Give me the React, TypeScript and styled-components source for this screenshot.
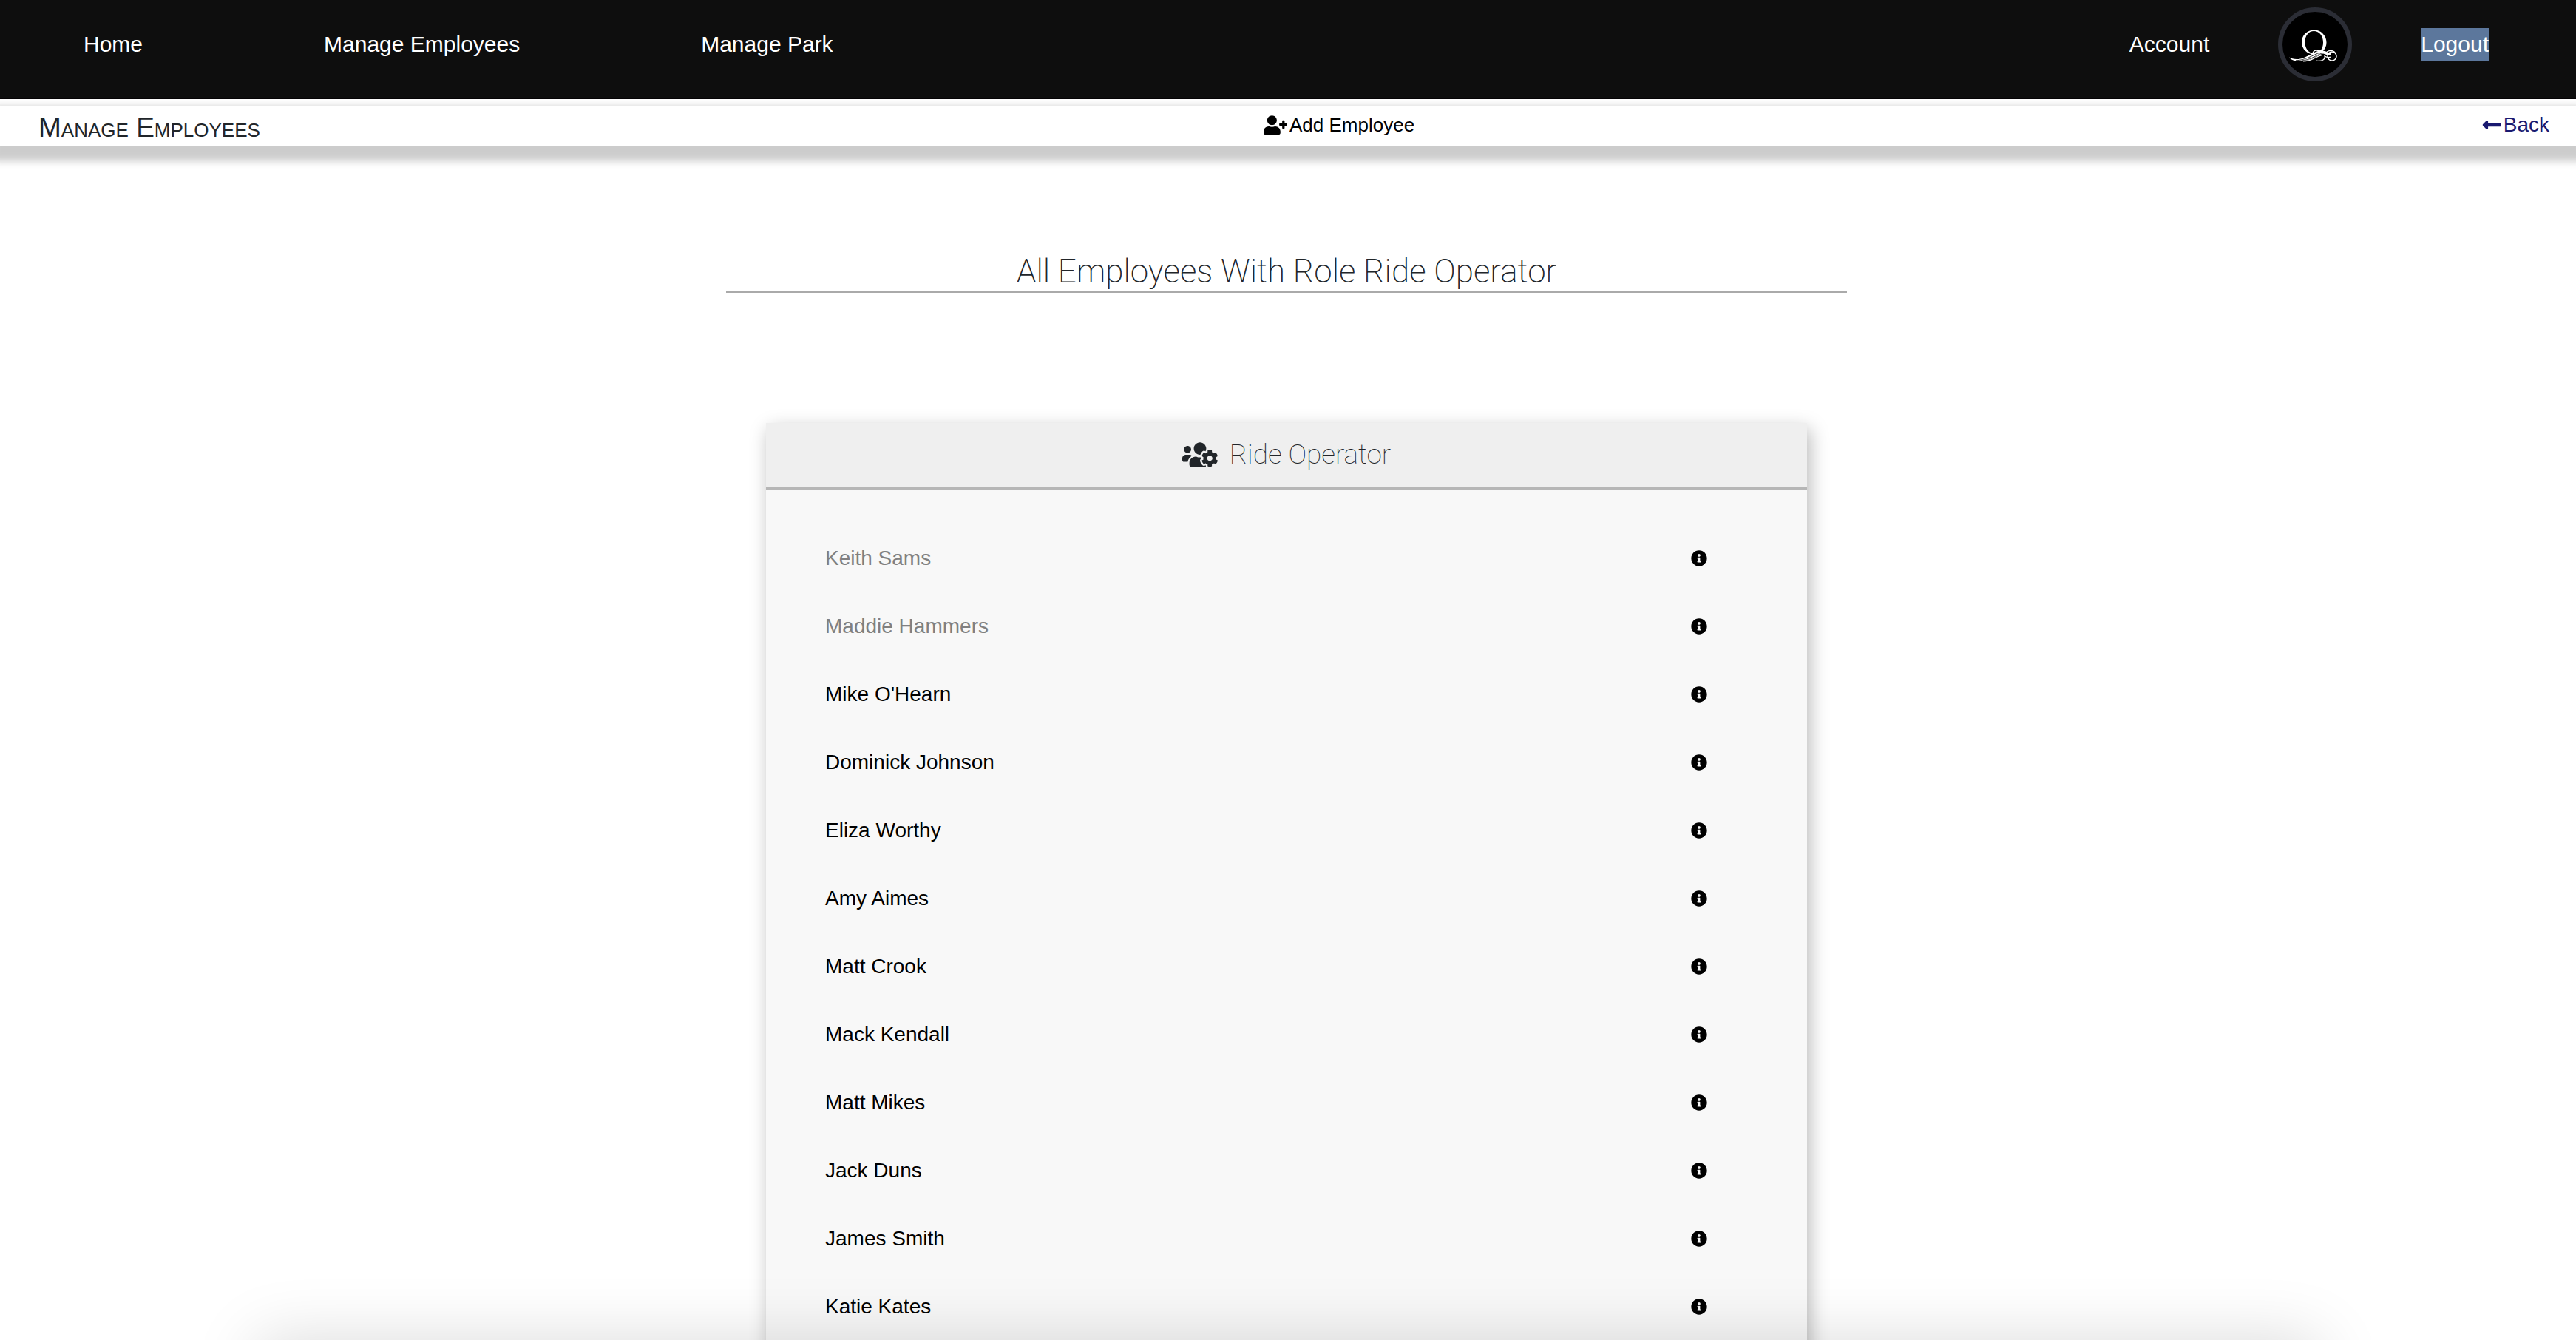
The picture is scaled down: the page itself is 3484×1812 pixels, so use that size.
import React from "react";
import styled, { createGlobalStyle } from "styled-components";
import { FaInfoCircle, FaLongArrowAltLeft, FaUserPlus, FaUsersCog } from "react-icons/fa";

const GlobalStyle = createGlobalStyle`
  *, *::before, *::after { box-sizing: border-box; }
  html, body { margin: 0; height: 100%; overflow: hidden; }
  body {
    background: #fff;
    color: #212529;
    font-family: "Liberation Sans", Arial, Helvetica, sans-serif;
    font-size: 28px;
    line-height: 42px;
  }
`;

const NavBar = styled.nav`
  display: flex;
  justify-content: space-between;
  padding: 10px 118px 22px 113px;
  border-bottom: 2px solid #050305;
  background: #0e0e0e;
`;

const NavGroup = styled.div<{ $gap: number }>`
  display: flex;
  align-items: center;
  gap: ${({ $gap }) => $gap}px;
`;

const NavLink = styled.a<{ $selected?: boolean }>`
  color: #fff;
  font-size: 30px;
  line-height: 44px;
  text-decoration: none;
  background: ${({ $selected }) => ($selected ? "#5c779c" : "transparent")};
`;

const Avatar = styled.a`
  display: block;
  width: 100px;
  height: 100px;
  border: 6px solid #2b2d35;
  border-radius: 50%;
  background: #000;
  overflow: hidden;
`;

const SubBar = styled.header`
  position: relative;
  display: flex;
  justify-content: space-between;
  align-items: center;
  margin-top: 10px;
  height: 54px;
  padding: 0 36px 4px 52px;
  background: #fff;
  box-shadow: 0 10px 10px 10px rgba(0, 0, 0, 0.2);
  clip-path: inset(-10px 0 -40px 0);
`;

const PageTitle = styled.h1`
  margin: 0;
  padding-top: 8px;
  font-size: 37px;
  line-height: 48px;
  font-weight: 400;
  font-variant: small-caps;
`;

const AddButton = styled.button`
  display: flex;
  align-items: center;
  gap: 3px;
  padding: 0;
  border: 0;
  background: none;
  color: #000;
  font: inherit;
  font-size: 26px;
`;

const BackLink = styled.a`
  display: flex;
  align-items: center;
  gap: 2px;
  padding-left: 86px;
  color: #191970;
  text-decoration: none;
`;

const Main = styled.main`
  display: flex;
  flex-direction: column;
  align-items: center;
  padding: 138px 4px 0 0;
`;

const RoleHeading = styled.h2`
  width: 1516px;
  max-width: 100%;
  margin: 0 0 176px;
  padding: 4px 0 0;
  border-bottom: 2px solid #aaa;
  font-family: Roboto, "Liberation Sans", sans-serif;
  font-size: 44px;
  line-height: 54px;
  font-weight: 200;
  text-align: center;
`;

const Card = styled.section`
  width: 1408px;
  max-width: 100%;
  background: #f8f8f8;
  box-shadow: 4px 8px 24px rgba(0, 0, 0, 0.28);
`;

const CardHeader = styled.header`
  display: flex;
  justify-content: center;
  align-items: center;
  gap: 16px;
  height: 90px;
  border-bottom: 4px solid #b6b6b6;
  background: #efefef;
`;

const CardTitle = styled.h3`
  margin: 0;
  font-family: Roboto, "Liberation Sans", sans-serif;
  font-size: 37px;
  line-height: 48px;
  font-weight: 100;
`;

const EmployeeList = styled.ul`
  margin: 0;
  padding: 47px 135px 46px 80px;
  list-style: none;
`;

const EmployeeRow = styled.li<{ $inactive?: boolean }>`
  display: flex;
  justify-content: space-between;
  align-items: center;
  height: 92px;
  color: ${({ $inactive }) => ($inactive ? "#808080" : "#000")};
`;

const InfoButton = styled.button`
  display: flex;
  padding: 0;
  border: 0;
  background: none;
  color: #000;
  font-size: 22px;
`;

const BottomShade = styled.div`
  position: fixed;
  top: 100%;
  left: 10%;
  right: 10%;
  height: 200px;
  box-shadow: 0 0 88px rgba(0, 0, 0, 0.15);
  pointer-events: none;
`;

const employees = [
  { name: "Keith Sams", inactive: true },
  { name: "Maddie Hammers", inactive: true },
  { name: "Mike O'Hearn" },
  { name: "Dominick Johnson" },
  { name: "Eliza Worthy" },
  { name: "Amy Aimes" },
  { name: "Matt Crook" },
  { name: "Mack Kendall" },
  { name: "Matt Mikes" },
  { name: "Jack Duns" },
  { name: "James Smith" },
  { name: "Katie Kates" },
];

function Logo() {
  return (
    <svg viewBox="6 6 88 88" width="88" height="88" fill="none" stroke="#fff" aria-hidden="true">
      <path
        fill="#fff"
        stroke="none"
        fillRule="evenodd"
        d="M49 30.500C58 30.500 65.500 38 65.500 47.500C65.500 57 58 63.500 49 63.500C39.500 63.500 32 56.500 32 47C32 37.500 39.500 30.500 49 30.500ZM48.500 32C41.500 32 36.500 38 36.500 47C36.500 56 41.500 62 49 62C56 62 61 56.500 61 47.500C61 38.500 56 32 48.500 32Z"
      />
      <path
        fill="#fff"
        stroke="none"
        d="M15 67.500C20 70.500 28 71 35 68C43 65 48 61 54 59C60 57.500 66 59 69 62C64 61 61 62 57 64C47 69 40 73 30 73C23 73 17 71 15 67.500Z"
      />
      <path stroke="#000" strokeWidth="0.8" d="M24 71.800C37 71.500 46 65 58 60.500M32 72C42 71.500 50 66 59 62" />
      <path strokeWidth="1.200" d="M34 73C46 73 49 67 60 64.500" />
      <path strokeWidth="1.300" d="M47 62C48 57 55 57 58 61" />
      <path strokeWidth="3.400" d="M56 59C62 60 64 63.500 72 63.500" />
      <circle cx="73" cy="66" r="6" strokeWidth="1.600" />
      <path strokeWidth="1.200" d="M52 72C59 73 64 71 63 66C66 68 68 68 72 67M66 60C70 57 77 58 78 63" />
    </svg>
  );
}

export default function App() {
  return (
    <>
      <GlobalStyle />
      <NavBar>
        <NavGroup $gap={245}>
          <NavLink href="#home">Home</NavLink>
          <NavLink href="#employees">Manage Employees</NavLink>
          <NavLink href="#park">Manage Park</NavLink>
        </NavGroup>
        <NavGroup $gap={93}>
          <NavLink href="#account">Account</NavLink>
          <Avatar href="#profile" aria-label="Profile">
            <Logo />
          </Avatar>
          <NavLink href="#logout" $selected>
            Logout
          </NavLink>
        </NavGroup>
      </NavBar>
      <SubBar>
        <PageTitle>Manage Employees</PageTitle>
        <AddButton type="button">
          <FaUserPlus size="1.25em" />
          Add Employee
        </AddButton>
        <BackLink href="#back">
          <FaLongArrowAltLeft />
          Back
        </BackLink>
      </SubBar>
      <Main>
        <RoleHeading>All Employees With Role Ride Operator</RoleHeading>
        <Card>
          <CardHeader>
            <FaUsersCog size={48} />
            <CardTitle>Ride Operator</CardTitle>
          </CardHeader>
          <EmployeeList>
            {employees.map(({ name, inactive }) => (
              <EmployeeRow key={name} $inactive={inactive}>
                {name}
                <InfoButton type="button" aria-label={`Details for ${name}`}>
                  <FaInfoCircle />
                </InfoButton>
              </EmployeeRow>
            ))}
          </EmployeeList>
        </Card>
      </Main>
      <BottomShade />
    </>
  );
}
